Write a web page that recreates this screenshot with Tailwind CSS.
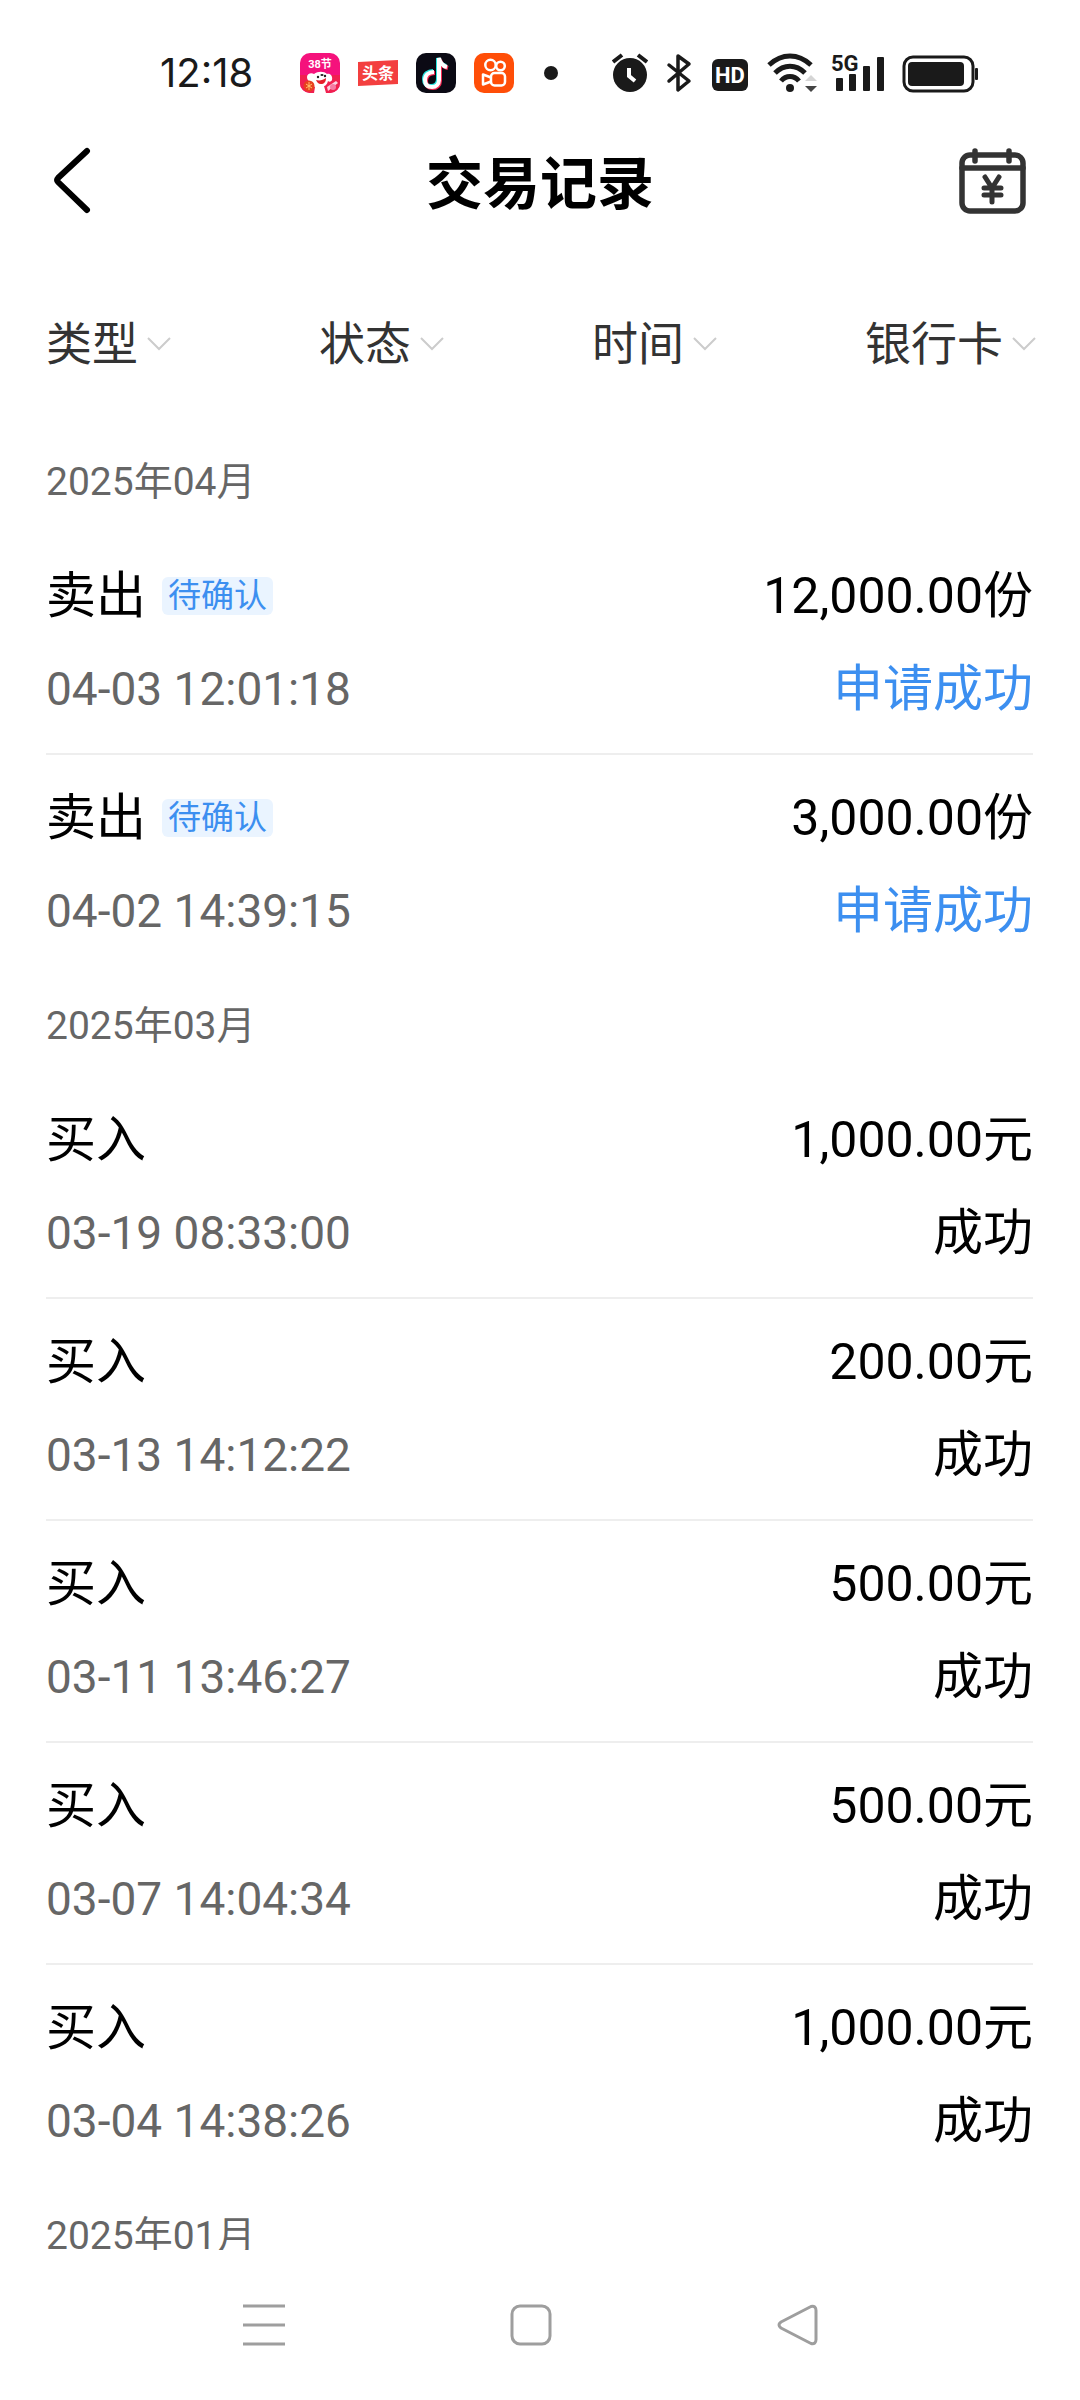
<!DOCTYPE html>
<html lang="zh-CN">
  <head>
    <meta charset="UTF-8" />
    <meta name="viewport" content="width=device-width, initial-scale=1.0" />
    <title>交易记录</title>
    <script src="https://cdn.jsdelivr.net/npm/@tailwindcss/browser@4"></script>
  </head>
  <body
    class="flex h-screen flex-col bg-white font-[Roboto,'Noto_Sans_CJK_SC',sans-serif] text-black"
  >
    <!-- Status bar -->
    <div
      class="flex h-[146px] shrink-0 items-center justify-between pr-[102px] pl-[160px] text-[#1a1a1a]"
    >
      <div class="flex items-center gap-[18px]">
        <span class="w-[98px] text-[40px] leading-[48px] font-[Inter,sans-serif]"
          >12:18</span
        >
        <svg class="ml-6 size-10" viewBox="0 0 40 40">
          <defs>
            <clipPath id="jd"><rect width="40" height="40" rx="10" /></clipPath>
          </defs>
          <g clip-path="url(#jd)">
            <rect width="40" height="40" fill="#f5127c" />
            <path d="M0 22h40v18H0z" fill="#f0204f" />
            <path
              d="M14 21c4-3 10-3 13 0 3-1 6 2 5 6-1 2-3 2-4 1-1 4-3 5-4 5l2 7H14l1-6c-3-1-4-3-4-6-2 1-4-1-4-4 0-3 4-5 7-3z"
              fill="#fff"
            />
            <path d="M27 34l9-6 2 2-10 8z" fill="#fbd3e2" />
            <circle cx="18" cy="24" r="1.2" fill="#222" />
            <circle cx="25" cy="23" r="1.2" fill="#222" />
            <ellipse cx="22" cy="22" rx="1.6" ry="1" fill="#222" />
            <path d="M16 27c4 1 7 0 10-2 0 4-2 6-5 6s-4-2-5-4z" fill="#e5202c" />
            <circle cx="9" cy="33" r="5.500" fill="#e8401f" />
            <path d="M6 31l6 4M6 35l6-4M9 29v8" stroke="#ffc46b" />
            <circle cx="33" cy="34" r="3" fill="#f57ba4" />
          </g>
          <text
            x="20"
            y="15"
            text-anchor="middle"
            class="fill-white text-[11px] font-bold"
          >
            38节
          </text>
        </svg>
        <svg class="size-10" viewBox="0 0 40 40">
          <path d="M0 9l40-2v24L0 33z" fill="#f33f3f" />
          <text
            x="20"
            y="26"
            text-anchor="middle"
            class="fill-white text-[16px] font-bold"
          >
            头条
          </text>
        </svg>
        <svg class="size-10" viewBox="0 0 40 40" fill="none" stroke-width="4">
          <rect width="40" height="40" rx="10" fill="#0b0a14" />
          <path
            d="M17 18c-5 0-9 3-9 8s3 7 7 7c4 0 7-3 7-7V5c1 5 4 7 8 8"
            stroke="#27e5e0"
          />
          <path
            d="M19 20c-5 0-9 3-9 8s3 7 7 7c4 0 7-3 7-7V7c1 5 4 7 8 8"
            stroke="#f62a54"
          />
          <path
            d="M18 19c-5 0-9 3-9 8s3 7 7 7c4 0 7-3 7-7V5c1 5 4 8 8 9"
            stroke="#fff"
          />
        </svg>
        <svg
          class="size-10"
          viewBox="0 0 40 40"
          fill="none"
          stroke="#fff"
          stroke-width="2.500"
        >
          <rect width="40" height="40" rx="10" fill="#ff4e08" stroke="none" />
          <circle cx="16.500" cy="12" r="5.200" />
          <circle cx="26.500" cy="13" r="4.300" />
          <rect x="17" y="20" width="14" height="12.500" rx="3.500" />
          <path d="M17 24.500l-8-3v10l8-3" stroke-linejoin="round" />
        </svg>
        <span class="ml-3 size-[14px] rounded-full bg-[#1a1a1a]"></span>
      </div>

      <div class="flex items-center gap-[18px]">
        <svg class="h-10 w-9" viewBox="0 0 36 40" fill="none">
          <circle cx="18" cy="22" r="17" fill="#1a1a1a" />
          <path d="M1 9l9-7M35 9l-9-7" stroke="#1a1a1a" stroke-width="4" />
          <path d="M17 15v8l6 5" stroke="#fff" stroke-width="4" />
        </svg>
        <svg
          class="h-10 w-[26px]"
          viewBox="0 0 26 40"
          fill="none"
          stroke="#1a1a1a"
          stroke-width="3.500"
          stroke-linejoin="round"
          stroke-linecap="round"
        >
          <path d="M3 12l20 16-11 9V3l11 8L3 28" />
        </svg>
        <svg class="size-10" viewBox="0 0 40 40">
          <rect x="2" y="6" width="36" height="32" rx="6" fill="#1a1a1a" />
          <text
            x="20"
            y="30"
            text-anchor="middle"
            class="fill-white text-[22px] font-bold"
          >
            HD
          </text>
        </svg>
        <svg class="h-10 w-12 overflow-visible" viewBox="0 0 48 40" fill="none">
          <g stroke="#1a1a1a" stroke-width="5">
            <path d="M1 12c13-12 29-12 42 0" />
            <path d="M7 20c9-9 21-9 30 0" />
            <path d="M13 28c5-6 13-6 18 0" />
          </g>
          <circle cx="22" cy="35" r="4" fill="#1a1a1a" />
          <path d="M37 28l6-6 6 6z" fill="#d5d5d5" />
          <path d="M37 33h12l-6 6z" fill="#444" />
        </svg>
        <svg class="h-10 w-[50px] overflow-visible" viewBox="0 0 50 40">
          <text x="-3" y="18" class="fill-[#1a1a1a] text-[22px] font-bold">
            5G
          </text>
          <g fill="#1a1a1a">
            <rect x="2" y="25" width="7" height="13" rx="1" />
            <rect x="15" y="21" width="7" height="17" rx="1" />
            <rect x="29" y="13" width="7" height="25" rx="1" />
            <rect x="43" y="4" width="7" height="34" rx="1" />
          </g>
        </svg>
        <svg class="h-10 w-[76px]" viewBox="0 0 76 40">
          <rect
            x="2"
            y="4"
            width="69"
            height="34"
            rx="9"
            fill="none"
            stroke="#1a1a1a"
            stroke-width="3"
          />
          <rect x="6" y="9" width="56" height="24" rx="4" fill="#1a1a1a" />
          <rect x="73" y="15" width="3" height="12" rx="1" fill="#1a1a1a" />
        </svg>
      </div>
    </div>

    <!-- Title bar -->
    <header class="flex h-[70px] shrink-0 items-center justify-between px-[52px]">
      <button type="button" aria-label="返回" class="w-[72px]">
        <svg
          class="h-[68px] w-10"
          viewBox="0 0 40 68"
          fill="none"
          stroke="#000"
          stroke-width="6"
          stroke-linecap="round"
          stroke-linejoin="round"
        >
          <path d="M35 4L6 31q-2 2 0 4L35 63" />
        </svg>
      </button>
      <h1 class="pt-2 text-[57px] leading-[62px] font-bold">交易记录</h1>
      <button type="button" aria-label="交易日历" class="flex w-[72px] justify-end">
        <svg
          class="h-[68px] w-[70px]"
          viewBox="0 0 70 68"
          fill="none"
          stroke="#333"
          stroke-width="5.500"
          stroke-linecap="round"
          stroke-linejoin="round"
        >
          <rect x="4" y="8" width="61" height="56" rx="8" />
          <path d="M4 21h61" />
          <path d="M17 4v10M51 4v10" />
          <path
            d="M27 30l7 11 7-11M34 41v14M26 41h17M26 48h17"
            stroke-width="5"
          />
        </svg>
      </button>
    </header>

    <!-- Filters -->
    <form
      class="flex shrink-0 justify-between pt-[97px] pr-11 pb-[58px] pl-[46px] text-[46px] leading-[62px] text-[#333]"
    >
      <label class="flex items-center gap-[9px]">
        <select aria-label="类型" class="appearance-none">
          <option>类型</option>
        </select>
        <svg class="h-4 w-6" viewBox="0 0 24 16" fill="none">
          <path d="M1 2l11 11L23 2" stroke="#ccc" stroke-width="2" />
        </svg>
      </label>
      <label class="flex items-center gap-[9px]">
        <select aria-label="状态" class="appearance-none">
          <option>状态</option>
        </select>
        <svg class="h-4 w-6" viewBox="0 0 24 16" fill="none">
          <path d="M1 2l11 11L23 2" stroke="#ccc" stroke-width="2" />
        </svg>
      </label>
      <label class="flex items-center gap-[9px]">
        <select aria-label="时间" class="appearance-none">
          <option>时间</option>
        </select>
        <svg class="h-4 w-6" viewBox="0 0 24 16" fill="none">
          <path d="M1 2l11 11L23 2" stroke="#ccc" stroke-width="2" />
        </svg>
      </label>
      <label class="flex items-center gap-[9px]">
        <select aria-label="银行卡" class="appearance-none">
          <option>银行卡</option>
        </select>
        <svg class="h-4 w-6" viewBox="0 0 24 16" fill="none">
          <path d="M1 2l11 11L23 2" stroke="#ccc" stroke-width="2" />
        </svg>
      </label>
    </form>

    <!-- Records -->
    <main
      class="min-h-0 flex-1 overflow-y-auto pr-[47px] pl-[46px] text-[50px] leading-[62px] [scrollbar-width:none]"
    >
      <section>
        <h2 class="h-[100px] text-[39px] leading-[98px] text-[#666]">
          2025年04月
        </h2>
        <ul>
          <li
            class="flex flex-col gap-[31px] border-b-2 border-[#eee] pt-8 pb-[33px]"
          >
            <div class="flex items-center justify-between">
              <div class="flex items-center gap-4">
                <span>卖出</span>
                <span
                  class="rounded-md bg-[#eaf4ff] px-[6px] text-[33px] leading-[38px] text-[#3c8ff0]"
                  >待确认</span
                >
              </div>
              <span>12,000.00份</span>
            </div>
            <div class="flex items-center justify-between">
              <time class="text-[46px] text-[#666]">04-03 12:01:18</time>
              <span class="text-[#3c8ff0]">申请成功</span>
            </div>
          </li>
          <li
            class="flex flex-col gap-[31px] border-b-2 border-transparent pt-8 pb-[33px]"
          >
            <div class="flex items-center justify-between">
              <div class="flex items-center gap-4">
                <span>卖出</span>
                <span
                  class="rounded-md bg-[#eaf4ff] px-[6px] text-[33px] leading-[38px] text-[#3c8ff0]"
                  >待确认</span
                >
              </div>
              <span>3,000.00份</span>
            </div>
            <div class="flex items-center justify-between">
              <time class="text-[46px] text-[#666]">04-02 14:39:15</time>
              <span class="text-[#3c8ff0]">申请成功</span>
            </div>
          </li>
        </ul>
      </section>

      <section>
        <h2 class="h-[100px] text-[39px] leading-[98px] text-[#666]">
          2025年03月
        </h2>
        <ul>
          <li
            class="flex flex-col gap-[31px] border-b-2 border-[#eee] pt-8 pb-[33px]"
          >
            <div class="flex items-center justify-between">
              <span>买入</span>
              <span>1,000.00元</span>
            </div>
            <div class="flex items-center justify-between">
              <time class="text-[46px] text-[#666]">03-19 08:33:00</time>
              <span>成功</span>
            </div>
          </li>
          <li
            class="flex flex-col gap-[31px] border-b-2 border-[#eee] pt-8 pb-[33px]"
          >
            <div class="flex items-center justify-between">
              <span>买入</span>
              <span>200.00元</span>
            </div>
            <div class="flex items-center justify-between">
              <time class="text-[46px] text-[#666]">03-13 14:12:22</time>
              <span>成功</span>
            </div>
          </li>
          <li
            class="flex flex-col gap-[31px] border-b-2 border-[#eee] pt-8 pb-[33px]"
          >
            <div class="flex items-center justify-between">
              <span>买入</span>
              <span>500.00元</span>
            </div>
            <div class="flex items-center justify-between">
              <time class="text-[46px] text-[#666]">03-11 13:46:27</time>
              <span>成功</span>
            </div>
          </li>
          <li
            class="flex flex-col gap-[31px] border-b-2 border-[#eee] pt-8 pb-[33px]"
          >
            <div class="flex items-center justify-between">
              <span>买入</span>
              <span>500.00元</span>
            </div>
            <div class="flex items-center justify-between">
              <time class="text-[46px] text-[#666]">03-07 14:04:34</time>
              <span>成功</span>
            </div>
          </li>
          <li
            class="flex flex-col gap-[31px] border-b-2 border-transparent pt-8 pb-[33px]"
          >
            <div class="flex items-center justify-between">
              <span>买入</span>
              <span>1,000.00元</span>
            </div>
            <div class="flex items-center justify-between">
              <time class="text-[46px] text-[#666]">03-04 14:38:26</time>
              <span>成功</span>
            </div>
          </li>
        </ul>
      </section>

      <section>
        <h2 class="h-[100px] text-[39px] leading-[98px] text-[#666]">
          2025年01月
        </h2>
      </section>
    </main>

    <!-- System navigation -->
    <nav
      class="grid h-[150px] shrink-0 grid-cols-3 items-center pr-[149px] pl-[130px]"
    >
      <button type="button" aria-label="最近任务" class="flex justify-center">
        <svg class="size-[42px]" viewBox="0 0 42 42">
          <path d="M0 2h42M0 21h42M0 40h42" stroke="#9e9e9e" stroke-width="3" />
        </svg>
      </button>
      <button type="button" aria-label="主屏幕" class="flex justify-center">
        <svg class="size-[42px]" viewBox="0 0 42 42" fill="none">
          <rect
            x="2"
            y="2"
            width="38"
            height="38"
            rx="8"
            stroke="#9e9e9e"
            stroke-width="3"
          />
        </svg>
      </button>
      <button type="button" aria-label="返回上一页" class="flex justify-center">
        <svg
          class="size-[42px]"
          viewBox="0 0 42 42"
          fill="none"
          stroke="#9e9e9e"
          stroke-width="3"
          stroke-linejoin="round"
        >
          <path
            d="M34 2.500L4 18q-4 3 0 6l30 15.500q5 1 5-4v-29q0-5-5-4z"
          />
        </svg>
      </button>
    </nav>
  </body>
</html>
